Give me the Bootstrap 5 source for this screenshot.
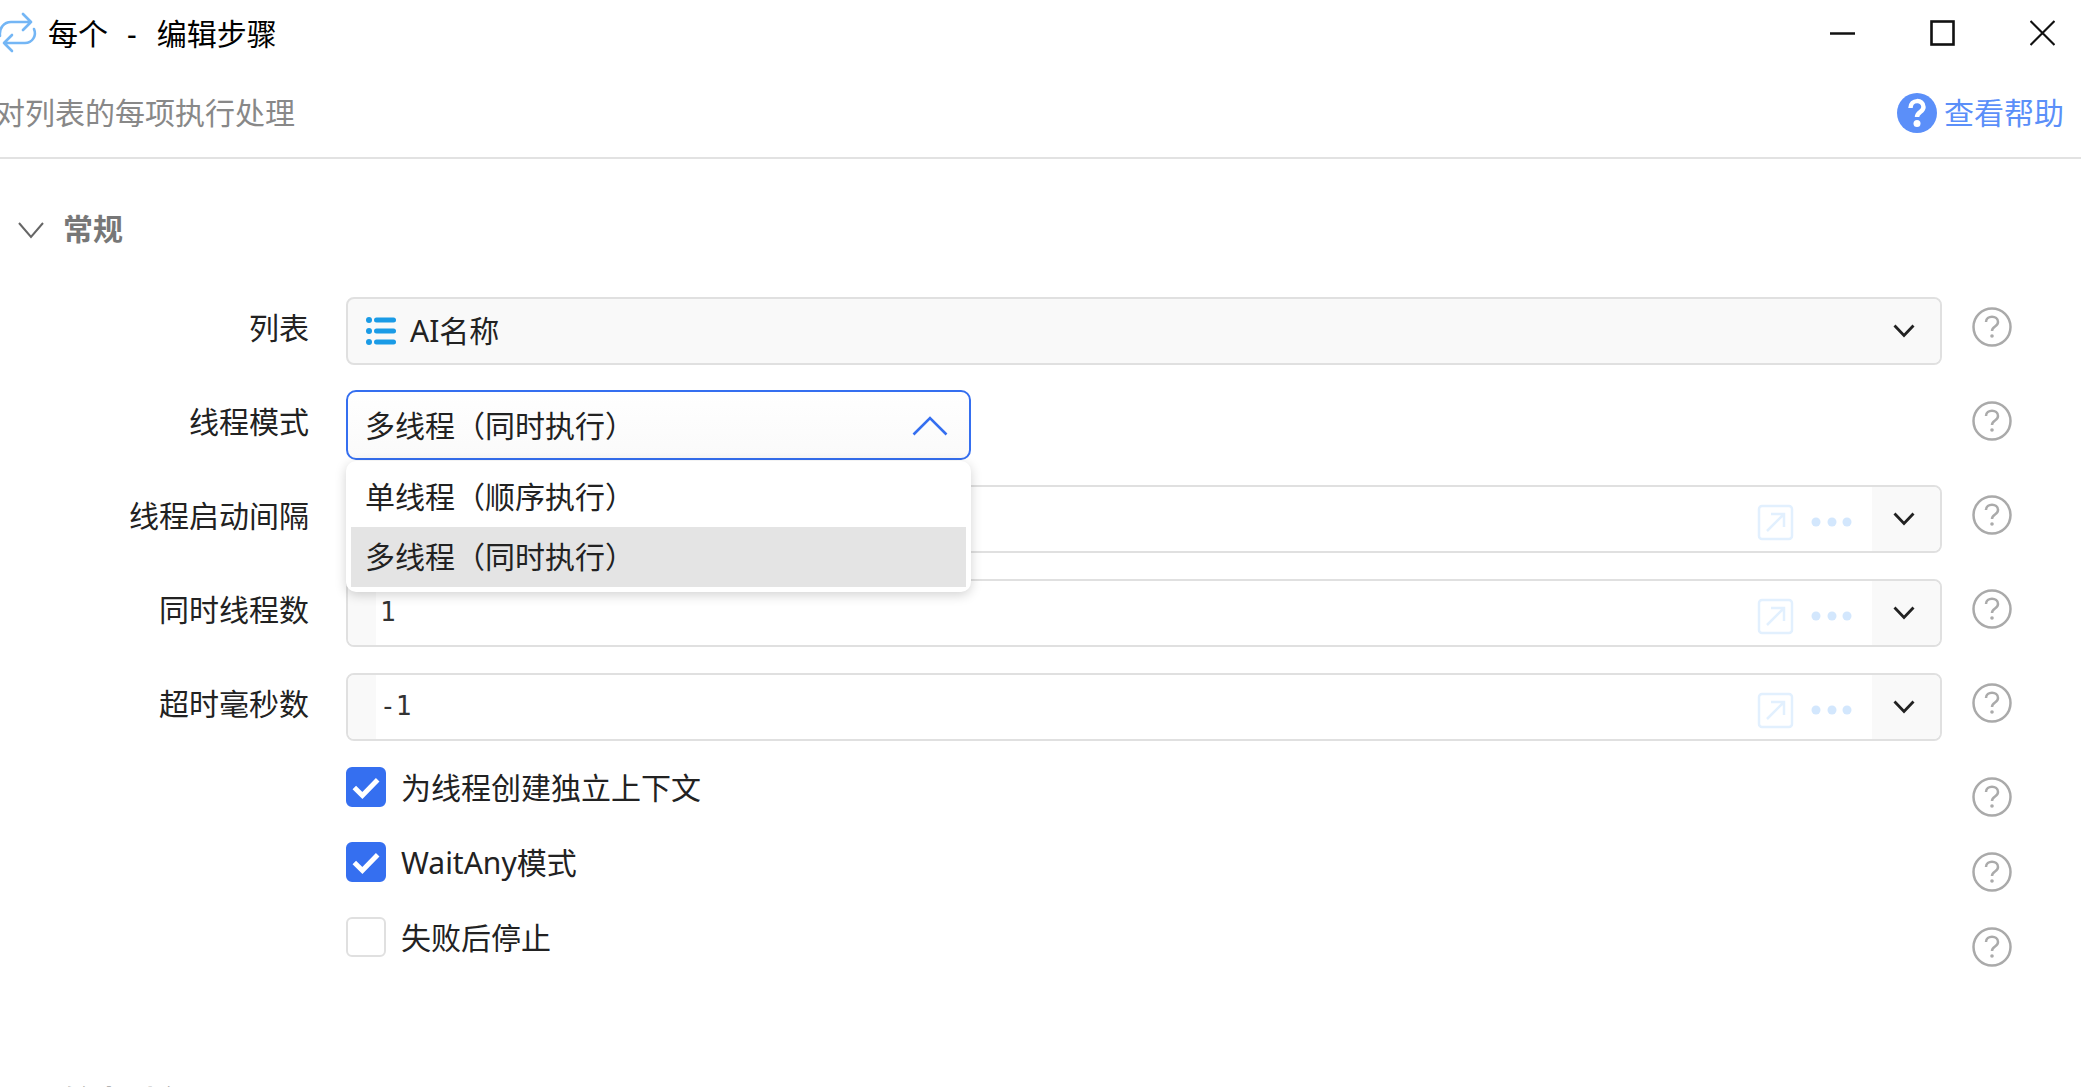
<!DOCTYPE html>
<html lang="zh-CN">
<head>
<meta charset="utf-8">
<title>每个 - 编辑步骤</title>
<link href="https://cdn.jsdelivr.net/npm/bootstrap@5.3.0/dist/css/bootstrap.min.css" rel="stylesheet">
<style>
html,body{height:100%;overflow:hidden;background:#fff}
body{font-family:"Noto Sans","Noto Sans CJK SC",sans-serif;font-size:30px;line-height:40px;color:#222}
.titlebar{height:66px}
.title-text{color:#000;margin-left:10px;padding-top:2px}
.title-dash{margin:0 20px 0 19px}
.win-btns{padding-right:26px;gap:75px}
.descbar{height:93px;padding:27px 17px 0 0;border-bottom:2px solid #e2e2e2;color:#888}
.desc-text{margin-left:-5px}
.help-link{color:#5b8ff9;gap:7px;text-decoration:none;height:40px}
.sect-head{height:138px;padding:50px 0 0 18px;gap:19px;color:#777;font-weight:700}
.sect-head svg{margin-top:-2px}
.frow{height:68px;margin-bottom:26px;padding-right:69px}
.flabel{width:309px;margin-right:37px;text-align:right;margin-top:-6px}
.fbox{width:1596px;height:68px;border:2px solid #e0e0e0;border-radius:8px;background:#fff;overflow:hidden}
.fbox-fill{background:#f9f9f9;padding-left:18px;gap:14px}
.fstrip{width:28px;background:#f9f9f9}
.fval{font-family:"DejaVu Sans Mono",monospace;font-size:26px;padding-left:4px;margin-top:-2px;color:#333}
.fcaret{width:68px;padding-right:4px;background:#f9f9f9;height:100%}
.fbox-fill .fcaret{margin-left:auto}
.ftools{margin-right:18px}
.selwrap{width:625px}
.selbox{width:625px;height:70px;margin-top:-1px;border:2px solid #356ff0;border-radius:10px;background:linear-gradient(#fff,#fafafa);padding:2px 21px 0 17px}
.selmenu.dropdown-menu{top:70px;left:0;width:625px;min-width:0;padding:6px 5px 5px;border:0;border-radius:10px;box-shadow:0 3px 12px rgba(0,0,0,.18);font-size:30px;--bs-dropdown-link-active-bg:#e4e4e4;--bs-dropdown-link-active-color:#222}
.selmenu .dropdown-item{height:60px;padding:0 14px;line-height:60px;color:#222}
.selmenu .dropdown-item.active{background:#e4e4e4}
.qmark{margin-left:30px;flex:none;margin-top:-9px}
.qmark-free{margin-left:auto}
.crow{height:40px;margin-bottom:35px;padding-right:69px;padding-left:346px}
.crow .form-check-input{width:40px;height:40px;margin:0 15px 0 0;border:2px solid #e0e0e0;border-radius:6px;flex:none}
.crow .form-check-input:checked{background-color:#356ff0;border-color:#356ff0;background-size:100%;background-image:url("data:image/svg+xml,%3csvg xmlns='http://www.w3.org/2000/svg' viewBox='0 0 40 40'%3e%3cpath fill='none' stroke='%23fff' stroke-width='5.500' d='M7 20.500l9 9L33 12'/%3e%3c/svg%3e")}
.crow .qmark{margin:10px 0 0 auto}
.crow .form-check-label{margin-top:1px}
.sect-next{padding:0 0 0 64px;margin-top:124px;color:#777;font-weight:700}
</style>
</head>
<body>
<div class="titlebar d-flex align-items-center">
  <svg width="38" height="66" viewBox="0 0 38 66" fill="none" stroke="#74b6f5" stroke-width="2.600" stroke-linecap="round" stroke-linejoin="round"><path d="M0 36C-1 28 4 22 11 22H31M23 14l8 8-8 8"/><path d="M34 29c3 7-2 14-9 14H4M12 35l-8 8 8 8"/></svg>
  <span class="title-text">每个<span class="title-dash">-</span>编辑步骤</span>
  <div class="win-btns d-flex ms-auto">
    <svg width="25" height="26" viewBox="0 0 25 26"><path d="M0 13.500H25" stroke="#111" stroke-width="2.500"/></svg>
    <svg width="25" height="26" viewBox="0 0 25 26"><rect x="1.500" y="1.500" width="22" height="23" fill="none" stroke="#111" stroke-width="2.600"/></svg>
    <svg width="25" height="26" viewBox="0 0 25 26"><path d="M.5 1l24 24M24.500 1l-24 24" stroke="#111" stroke-width="2.200"/></svg>
  </div>
</div>
<div class="descbar d-flex justify-content-between align-items-start">
  <span class="desc-text">对列表的每项执行处理</span>
  <a class="help-link d-flex align-items-center" href="#">
    <svg width="40" height="40" viewBox="0 0 40 40"><circle cx="20" cy="20" r="20" fill="#5b8ff9"/><path d="M13.500 15c0-9 13-9 13-1 0 5-6.500 5-6.500 10" fill="none" stroke="#fff" stroke-width="4.500"/><circle cx="20" cy="30.500" r="3.500" fill="#fff"/></svg>
    <span>查看帮助</span>
  </a>
</div>
<div class="sect-head d-flex align-items-start">
  <svg width="26" height="46" viewBox="0 0 26 46"><path d="M1 16l12 14 12-14" fill="none" stroke="#666" stroke-width="2"/></svg>
  <span>常规</span>
</div>

<div class="frow d-flex align-items-center">
  <label class="flabel">列表</label>
  <div class="fbox fbox-fill d-flex align-items-center">
    <svg width="30" height="30" viewBox="0 0 30 30" fill="#1a9be6"><circle cx="3" cy="4" r="3"/><circle cx="3" cy="15" r="3"/><circle cx="3" cy="26" r="3"/><rect x="8" y="1.500" width="22" height="5" rx="2.500"/><rect x="8" y="12.500" width="22" height="5" rx="2.500"/><rect x="8" y="23.500" width="22" height="5" rx="2.500"/></svg>
    <span>AI名称</span>
    <div class="fcaret d-flex align-items-center justify-content-center"><svg width="22" height="14" viewBox="0 0 22 14"><path d="M1.500 1.500L11 11.500l9.500-10" fill="none" stroke="#222" stroke-width="2.800"/></svg></div>
  </div>
  <svg class="qmark" width="40" height="40" viewBox="0 0 40 40" fill="none" stroke="#aaa" stroke-width="2.500"><circle cx="20" cy="20" r="18.500"/><path d="M14 15c0-7 12-7 12 0 0 5-6 4-6 9"/><circle cx="20" cy="29" r="1.800" fill="#aaa" stroke="none"/></svg>
</div>

<div class="frow d-flex align-items-center">
  <label class="flabel">线程模式</label>
  <div class="selwrap position-relative dropdown">
    <div class="selbox d-flex align-items-center justify-content-between">
      <span>多线程（同时执行）</span>
      <svg width="36" height="20" viewBox="0 0 36 20"><path d="M1.500 18.500L18 2l16.500 16.500" fill="none" stroke="#356ff0" stroke-width="2.600"/></svg>
    </div>
    <ul class="selmenu dropdown-menu show position-absolute list-unstyled m-0">
      <li><a class="dropdown-item" href="#">单线程（顺序执行）</a></li>
      <li><a class="dropdown-item active" href="#">多线程（同时执行）</a></li>
    </ul>
  </div>
  <svg class="qmark qmark-free" width="40" height="40" viewBox="0 0 40 40" fill="none" stroke="#aaa" stroke-width="2.500"><circle cx="20" cy="20" r="18.500"/><path d="M14 15c0-7 12-7 12 0 0 5-6 4-6 9"/><circle cx="20" cy="29" r="1.800" fill="#aaa" stroke="none"/></svg>
</div>

<div class="frow d-flex align-items-center">
  <label class="flabel">线程启动间隔</label>
  <div class="fbox d-flex align-items-center">
    <div class="fstrip h-100"></div><span class="fval flex-grow-1"></span>
    <svg class="ftools" width="97" height="64" viewBox="0 0 97 64" fill="none" stroke="#e2f0fe" stroke-width="2.500"><rect x="2" y="19" width="33" height="33" rx="3"/><path d="M10 44L27 27M14 27H27V40"/><g fill="#d3e7fd" stroke="none"><circle cx="59" cy="35" r="4.500"/><circle cx="75" cy="35" r="4.500"/><circle cx="90" cy="35" r="4.500"/></g></svg>
    <div class="fcaret d-flex align-items-center justify-content-center"><svg width="22" height="14" viewBox="0 0 22 14"><path d="M1.500 1.500L11 11.500l9.500-10" fill="none" stroke="#222" stroke-width="2.800"/></svg></div>
  </div>
  <svg class="qmark" width="40" height="40" viewBox="0 0 40 40" fill="none" stroke="#aaa" stroke-width="2.500"><circle cx="20" cy="20" r="18.500"/><path d="M14 15c0-7 12-7 12 0 0 5-6 4-6 9"/><circle cx="20" cy="29" r="1.800" fill="#aaa" stroke="none"/></svg>
</div>

<div class="frow d-flex align-items-center">
  <label class="flabel">同时线程数</label>
  <div class="fbox d-flex align-items-center">
    <div class="fstrip h-100"></div><span class="fval flex-grow-1">1</span>
    <svg class="ftools" width="97" height="64" viewBox="0 0 97 64" fill="none" stroke="#e2f0fe" stroke-width="2.500"><rect x="2" y="19" width="33" height="33" rx="3"/><path d="M10 44L27 27M14 27H27V40"/><g fill="#d3e7fd" stroke="none"><circle cx="59" cy="35" r="4.500"/><circle cx="75" cy="35" r="4.500"/><circle cx="90" cy="35" r="4.500"/></g></svg>
    <div class="fcaret d-flex align-items-center justify-content-center"><svg width="22" height="14" viewBox="0 0 22 14"><path d="M1.500 1.500L11 11.500l9.500-10" fill="none" stroke="#222" stroke-width="2.800"/></svg></div>
  </div>
  <svg class="qmark" width="40" height="40" viewBox="0 0 40 40" fill="none" stroke="#aaa" stroke-width="2.500"><circle cx="20" cy="20" r="18.500"/><path d="M14 15c0-7 12-7 12 0 0 5-6 4-6 9"/><circle cx="20" cy="29" r="1.800" fill="#aaa" stroke="none"/></svg>
</div>

<div class="frow d-flex align-items-center">
  <label class="flabel">超时毫秒数</label>
  <div class="fbox d-flex align-items-center">
    <div class="fstrip h-100"></div><span class="fval flex-grow-1">-1</span>
    <svg class="ftools" width="97" height="64" viewBox="0 0 97 64" fill="none" stroke="#e2f0fe" stroke-width="2.500"><rect x="2" y="19" width="33" height="33" rx="3"/><path d="M10 44L27 27M14 27H27V40"/><g fill="#d3e7fd" stroke="none"><circle cx="59" cy="35" r="4.500"/><circle cx="75" cy="35" r="4.500"/><circle cx="90" cy="35" r="4.500"/></g></svg>
    <div class="fcaret d-flex align-items-center justify-content-center"><svg width="22" height="14" viewBox="0 0 22 14"><path d="M1.500 1.500L11 11.500l9.500-10" fill="none" stroke="#222" stroke-width="2.800"/></svg></div>
  </div>
  <svg class="qmark" width="40" height="40" viewBox="0 0 40 40" fill="none" stroke="#aaa" stroke-width="2.500"><circle cx="20" cy="20" r="18.500"/><path d="M14 15c0-7 12-7 12 0 0 5-6 4-6 9"/><circle cx="20" cy="29" r="1.800" fill="#aaa" stroke="none"/></svg>
</div>

<div class="crow d-flex align-items-start">
  <input class="form-check-input" type="checkbox" id="c1" checked>
  <label class="form-check-label" for="c1">为线程创建独立上下文</label>
  <svg class="qmark" width="40" height="40" viewBox="0 0 40 40" fill="none" stroke="#aaa" stroke-width="2.500"><circle cx="20" cy="20" r="18.500"/><path d="M14 15c0-7 12-7 12 0 0 5-6 4-6 9"/><circle cx="20" cy="29" r="1.800" fill="#aaa" stroke="none"/></svg>
</div>
<div class="crow d-flex align-items-start">
  <input class="form-check-input" type="checkbox" id="c2" checked>
  <label class="form-check-label" for="c2">WaitAny模式</label>
  <svg class="qmark" width="40" height="40" viewBox="0 0 40 40" fill="none" stroke="#aaa" stroke-width="2.500"><circle cx="20" cy="20" r="18.500"/><path d="M14 15c0-7 12-7 12 0 0 5-6 4-6 9"/><circle cx="20" cy="29" r="1.800" fill="#aaa" stroke="none"/></svg>
</div>
<div class="crow d-flex align-items-start">
  <input class="form-check-input" type="checkbox" id="c3">
  <label class="form-check-label" for="c3">失败后停止</label>
  <svg class="qmark" width="40" height="40" viewBox="0 0 40 40" fill="none" stroke="#aaa" stroke-width="2.500"><circle cx="20" cy="20" r="18.500"/><path d="M14 15c0-7 12-7 12 0 0 5-6 4-6 9"/><circle cx="20" cy="29" r="1.800" fill="#aaa" stroke="none"/></svg>
</div>
<div class="sect-next">输出到全局</div>
<script src="https://cdn.jsdelivr.net/npm/bootstrap@5.3.0/dist/js/bootstrap.bundle.min.js"></script>
</body>
</html>
